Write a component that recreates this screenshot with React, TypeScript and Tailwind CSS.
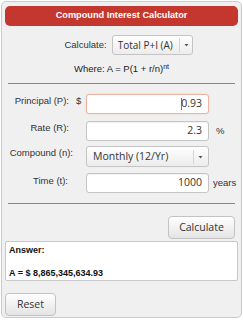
import React from 'react';

const label = "text-[9.5px] leading-[12px] text-[#333] whitespace-nowrap";
const uiFont = { fontFamily: '"Open Sans", "DejaVu Sans", sans-serif' };

function Caret({ className = '' }: { className?: string }) {
    return (
        <div className={`flex items-center h-full ${className}`}>
            <div className="w-px h-[14px] bg-[#d4d4d4]" />
            <svg width="11" height="6" viewBox="0 0 11 6" className="ml-[1px]">
                <path d="M3.5 2 L7.5 2 L5.5 4.5 Z" fill="#555" />
            </svg>
        </div>
    );
}

function Field({ value, focused = false }: { value: string; focused?: boolean }) {
    return (
        <div
            className={`w-[123px] h-[20px] rounded-[3px] bg-white flex items-center justify-end pr-[6px] text-[10.5px] text-[#333] border ${focused ? 'border-[#ebb2a2] shadow-[0_0_2px_#f6d3c8]' : 'border-[#c4c4c4] shadow-[inset_0_1px_1px_rgba(0,0,0,0.06)]'}`}
            style={uiFont}
        >
            {focused && <span className="w-px h-[12px] bg-[#777] mr-[-1px]" />}
            {value}
        </div>
    );
}

export default function App() {
    return (
        <div className="w-[243px] h-[320px] bg-white pl-[1px] pt-[1px]" style={{ fontFamily: '"Liberation Sans", Arial, sans-serif' }}>
            <div className="w-[241px] h-[317px] border border-[#cbcbcb] rounded-[5px] bg-[#f0f0f0] px-[3px] pt-[4px] flex flex-col">
                <div className="h-[20px] rounded-[5px] bg-[#c3372f] flex items-center justify-center text-white font-bold text-[9.2px]">
                    Compound Interest Calculator
                </div>

                <div className="mt-[9px] flex items-center justify-center pl-[14px]">
                    <span className={label}>Calculate:</span>
                    <div
                        className="ml-[5px] w-[81px] h-[20px] rounded-[3px] border border-[#c4c4c4] bg-gradient-to-b from-white to-[#ececec] flex items-center justify-between pl-[5px] text-[10px] text-[#333]"
                        style={uiFont}
                    >
                        <span>Total P+I (A)</span>
                        <Caret />
                    </div>
                </div>

                <div className="mt-[8px] text-center text-[9.5px] leading-[12px] text-[#222]">
                    Where: A = P(1 + r/n)<sup className="text-[7px]">nt</sup>
                </div>

                <div className="mt-[8px] mx-[3px] h-px bg-[#858585]" />

                <div className="mt-[10px] flex items-start">
                    <span className={`${label} w-[64px] text-right pt-[1px]`}>Principal (P):</span>
                    <span className={`${label} w-[17px] pl-[7px] pt-[1px]`}>$</span>
                    <Field value="0.93" focused />
                </div>

                <div className="mt-[7px] flex items-start">
                    <span className={`${label} w-[64px] text-right pt-[1px]`}>Rate (R):</span>
                    <span className="w-[17px]" />
                    <Field value="2.3" />
                    <span className={`${label} ml-[7px] self-center`}>%</span>
                </div>

                <div className="mt-[5px] flex items-start">
                    <span className={`${label} w-[68px] text-right pt-[1px]`}>Compound (n):</span>
                    <span className="w-[13px]" />
                    <div
                        className="w-[123px] h-[21px] rounded-[3px] border border-[#c4c4c4] bg-gradient-to-b from-white to-[#ececec] flex items-center justify-between pl-[6px] text-[10.5px] text-[#333]"
                        style={uiFont}
                    >
                        <span>Monthly (12/Yr)</span>
                        <Caret className="pr-[2px]" />
                    </div>
                </div>

                <div className="mt-[6px] flex items-start">
                    <span className={`${label} w-[63px] text-right pt-[2px]`}>Time (t):</span>
                    <span className="w-[18px]" />
                    <Field value="1000" />
                    <span className={`${label} ml-[4px] self-center`}>years</span>
                </div>

                <div className="mt-[10px] mx-[3px] h-px bg-[#858585]" />

                <div className="mt-[12px] flex justify-end pr-[3px]">
                    <button
                        className="w-[67px] h-[23px] rounded-[4px] border border-[#c2c2c2] bg-gradient-to-b from-white to-[#e4e4e4] text-[10.5px] text-[#333]"
                        style={uiFont}
                    >
                        Calculate
                    </button>
                </div>

                <div className="mt-[2px] h-[40px] border border-[#c8c8c8] rounded-[2px] bg-white px-[3px] pt-[3px] text-[9px] font-bold text-[#111] leading-[11px]">
                    <div>Answer:</div>
                    <div className="mt-[12px]">A = $ 8,865,345,634.93</div>
                </div>

                <div className="mt-[10px]">
                    <button
                        className="w-[51px] h-[23px] rounded-[4px] border border-[#c2c2c2] bg-gradient-to-b from-white to-[#e4e4e4] text-[10.5px] text-[#333]"
                        style={uiFont}
                    >
                        Reset
                    </button>
                </div>
            </div>
        </div>
    );
}
